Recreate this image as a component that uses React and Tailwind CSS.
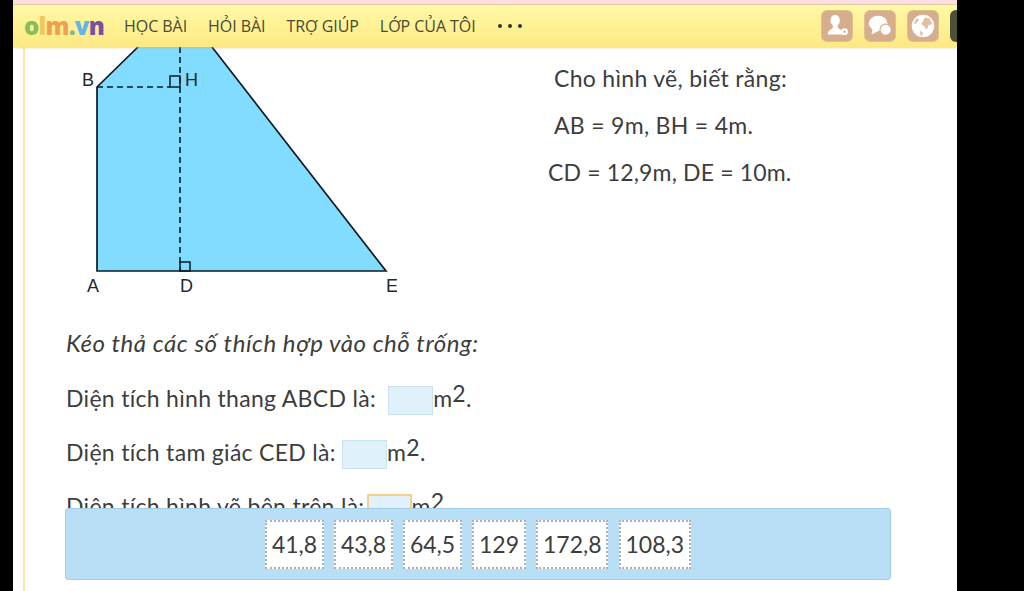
import React from "react";

const NAV = ["HỌC BÀI", "HỎI BÀI", "TRỢ GIÚP", "LỚP CỦA TÔI"];
const CHIPS = [
  ["41,8", "w-[58.5px]"],
  ["43,8", "w-[58.5px]"],
  ["64,5", "w-[58.5px]"],
  ["129", "w-[53.5px]"],
  ["172,8", "w-[72px]"],
  ["108,3", "w-[72px]"],
];

function IconBox({ children }) {
  return (
    <div className="w-[32px] h-[32px] rounded-[6px] bg-[#d6ae8d] border border-[#d9c48e]">
      <svg viewBox="0 0 32 32" className="w-full h-full" fill="#fff">
        {children}
      </svg>
    </div>
  );
}

function Blank({ className = "" }) {
  return (
    <span className={`inline-block w-[45px] h-[29px] align-[-8px] bg-[#e0f1fb] border border-[#c9e2ef] ${className}`} />
  );
}

function Unit() {
  return (
    <span>
      m<sup className="text-[23px] leading-[0] top-[-5px]">2</sup>.
    </span>
  );
}

function Figure() {
  return (
    <svg width="347" height="270" viewBox="0 0 347 270" className="shrink-0" style={{ fontFamily: "Liberation Sans, sans-serif" }}>
      <polygon points="47,40 88,0 162,0 336,224 47,224" fill="#82dcff" />
      <polyline points="88,0 47,40 47,224 336,224 162,0" fill="none" stroke="#0b1b26" strokeWidth="1.7" />
      <line x1="130" y1="0" x2="130" y2="224" stroke="#0c3650" strokeWidth="1.8" strokeDasharray="6 4" />
      <line x1="47" y1="40" x2="120" y2="40" stroke="#0b1b26" strokeWidth="1.5" strokeDasharray="6 4" />
      <rect x="120" y="29" width="10" height="11" fill="none" stroke="#0b1b26" strokeWidth="1.5" />
      <rect x="130" y="215" width="10" height="9" fill="none" stroke="#0b1b26" strokeWidth="1.5" />
      <g fill="#1f2a30" fontSize="18">
        <text x="32" y="39">B</text>
        <text x="135" y="39">H</text>
        <text x="37" y="245">A</text>
        <text x="130" y="245">D</text>
        <text x="336" y="245">E</text>
      </g>
    </svg>
  );
}

export default function App() {
  return (
    <div className="h-[591px] flex bg-black overflow-hidden font-['Lato',sans-serif]">
      <main className="relative ml-[13px] w-[944px] h-full bg-white overflow-hidden flex flex-col">
        <div className="h-[5px] shrink-0 bg-[#fbdfe3] border-b border-[#e3cfa8]" />
        <nav className="h-[42px] shrink-0 flex items-center bg-gradient-to-b from-[#fff9a6] to-[#fde983] shadow-[0_1px_2px_rgba(200,180,90,0.5)] z-10">
          <div className="ml-[11px] w-[100px] text-[24px] font-extrabold tracking-[-0.8px] leading-none font-['Open_Sans',sans-serif]">
            <span className="text-[#86bd5a]">o</span>
            <span className="text-[#f5c45c]">l</span>
            <span className="text-[#efa04e]">m</span>
            <span className="text-[#7fb98a]">.</span>
            <span className="text-[#62b5e6]">v</span>
            <span className="text-[#7b4ea6]">n</span>
          </div>
          <div className="flex items-center gap-[21px] text-[16px] text-[#4a4a32] font-['Open_Sans',sans-serif] tracking-[-0.05px]">
            {NAV.map((n) => (
              <span key={n}>{n}</span>
            ))}
            <span className="flex gap-[6px] ml-[1px]">
              <i className="w-[4px] h-[4px] rounded-full bg-[#333]" />
              <i className="w-[4px] h-[4px] rounded-full bg-[#333]" />
              <i className="w-[4px] h-[4px] rounded-full bg-[#333]" />
            </span>
          </div>
          <div className="ml-auto flex items-center gap-[11px]">
            <IconBox>
              <ellipse cx="14" cy="10" rx="5" ry="6" />
              <path d="M11.500 14h5l.5 4 4 2.500q1 1 1 4.500H6q0-3 2-4.500l3.500-2z" />
              <circle cx="24" cy="22" r="3.600" />
              <circle cx="24" cy="22" r="1.300" fill="#d6ae8d" />
            </IconBox>
            <IconBox>
              <ellipse cx="14" cy="13" rx="10" ry="8" />
              <path d="M8 18l-1 7 8-4z" />
              <circle cx="22" cy="20" r="6" stroke="#d6ae8d" strokeWidth="1.200" />
            </IconBox>
            <IconBox>
              <circle cx="16" cy="16" r="12" />
              <path d="M18 7l5 1 3 6-4 1-2 5-3-4-3-2 2-3zM9 8l3 1-3 4-3 1zM13 21l3 2-1 4-2-2z" fill="#e2bfa2" />
            </IconBox>
            <div className="w-[7px] h-[32px] rounded-l-[6px] bg-[#4d4f3a]" />
          </div>
        </nav>
        <div className="flex-1 min-h-0 ml-[10px] border-l-2 border-[#f7eaa8] text-[23px] tracking-[0.3px] text-[#3d3d3d] leading-none">
          <div className="flex h-[270px] pl-[25px]">
            <Figure />
            <div className="ml-[157px] pt-[20px] flex flex-col gap-[23px]">
              <p className="h-[24px]">Cho hình vẽ, biết rằng:</p>
              <p className="h-[24px]">AB = 9m, BH = 4m.</p>
              <p className="h-[24px] ml-[-6px] tracking-[0.15px]">CD = 12,9m, DE = 10m.</p>
            </div>
          </div>
          <div className="pl-[41px]">
            <p className="h-[54px] leading-[52px] italic text-[24px] tracking-[0.55px]">Kéo thả các số thích hợp vào chỗ trống:</p>
            <p className="h-[54px] leading-[54px] whitespace-pre">
              Diện tích hình thang ABCD là: <Blank className="ml-[6px]" /><Unit />
            </p>
            <p className="h-[54px] leading-[54px] whitespace-pre">
              Diện tích tam giác CED là: <Blank /><Unit />
            </p>
            <p className="h-[54px] leading-[54px] whitespace-pre">
              Diện tích hình vẽ bên trên là: <Blank className="ml-[-4px] border-[#f5cf8e] border-2" /><Unit />
            </p>
          </div>
        </div>
        <div className="absolute left-[52px] bottom-[11px] w-[826px] h-[72px] rounded-[3px] bg-[#b9dff6] border border-[#a3cde6] flex items-center justify-center gap-[10.5px] z-20">
          {CHIPS.map(([v, w]) => (
            <span
              key={v}
              className={`${w} h-[49px] flex items-center justify-center bg-white border-2 border-dotted border-[#b0b0b0] text-[23px] text-[#3d3d3d]`}
            >
              {v}
            </span>
          ))}
        </div>
      </main>
    </div>
  );
}
